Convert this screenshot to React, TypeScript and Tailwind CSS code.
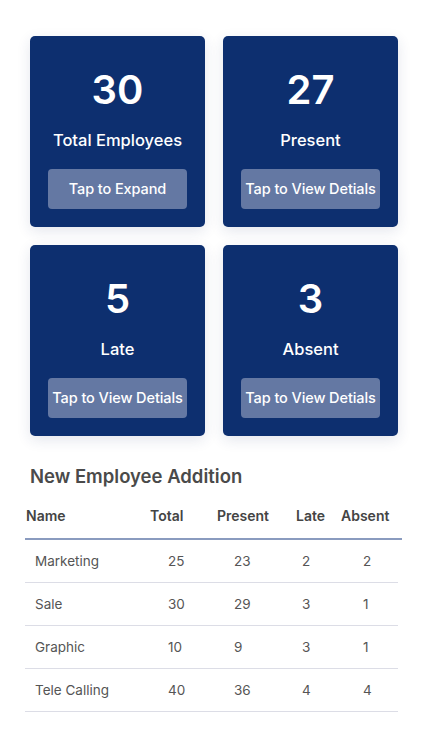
const cards = [
  { value: "30", label: "Total Employees", action: "Tap to Expand" },
  { value: "27", label: "Present", action: "Tap to View Detials" },
  { value: "5", label: "Late", action: "Tap to View Detials" },
  { value: "3", label: "Absent", action: "Tap to View Detials" },
];

const rows = [
  { name: "Marketing", total: 25, present: 23, late: 2, absent: 2 },
  { name: "Sale", total: 30, present: 29, late: 3, absent: 1 },
  { name: "Graphic", total: 10, present: 9, late: 3, absent: 1 },
  { name: "Tele Calling", total: 40, present: 36, late: 4, absent: 4 },
];

function StatCard({ value, label, action }: { value: string; label: string; action: string }) {
  return (
    <div className="h-[191px] rounded-[5px] bg-[#0d2f6f] shadow-[0_4px_14px_rgba(30,50,110,0.12)] flex flex-col items-center pt-[34px] px-[18px]">
      <div className="text-[40px] leading-[40px] font-semibold text-white">{value}</div>
      <div className="mt-[20px] text-[16.5px] leading-[20px] font-medium text-white">{label}</div>
      <button className="mt-[19px] w-[139px] h-[40px] rounded-[4px] bg-[#6478a3] text-white text-[14.5px] font-medium tracking-[-0.1px]">
        {action}
      </button>
    </div>
  );
}

export default function App() {
  return (
    <div className="min-h-screen bg-white font-['Inter',sans-serif] pt-[36px]">
      {/* Stat cards */}
      <div className="pl-[30px] pr-[24px] grid grid-cols-2 gap-x-[18px] gap-y-[18px]">
        {cards.map((c) => (
          <StatCard key={c.label} {...c} />
        ))}
      </div>

      {/* Table */}
      <h2 className="mt-[28px] pl-[30px] text-[18.5px] leading-[24px] font-semibold text-[#4a4a4a]">
        New Employee Addition
      </h2>

      <div className="mt-[17px] ml-[25px] w-[377px]">
        <div className="grid grid-cols-[124px_67px_79px_45px_1fr] pl-[1px] h-[33px] items-start text-[14px] font-semibold text-[#444]">
          <div>Name</div>
          <div>Total</div>
          <div>Present</div>
          <div>Late</div>
          <div>Absent</div>
        </div>
        <div className="h-[2px] bg-[#8a9bbf]" />
        {rows.map((r) => (
          <div key={r.name} className="w-[373px] border-b border-[#dcdde6]">
            <div className="grid grid-cols-[133px_66px_68px_61px_1fr] pl-[10px] h-[42px] items-center text-[13.5px] text-[#555]">
              <div>{r.name}</div>
              <div>{r.total}</div>
              <div>{r.present}</div>
              <div>{r.late}</div>
              <div>{r.absent}</div>
            </div>
          </div>
        ))}
      </div>
    </div>
  );
}
